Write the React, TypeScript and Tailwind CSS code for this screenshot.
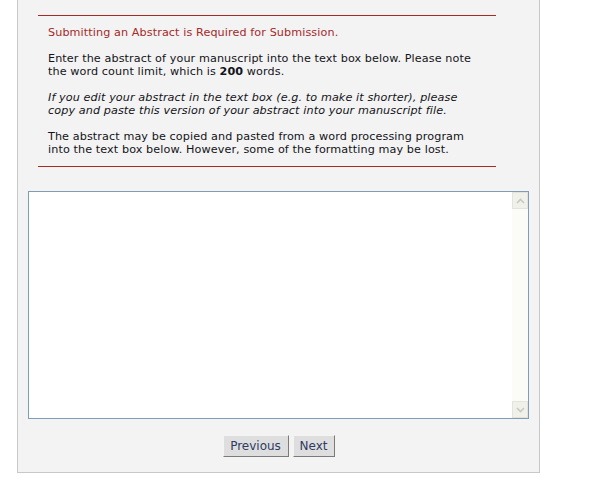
import { useState } from "react";

const font = { fontFamily: '"DejaVu Sans", Verdana, sans-serif' };

const ScrollArrow = ({ up }: { up?: boolean }) => (
  <div className="flex h-[17px] w-[16px] items-center justify-center border border-[#e4e4dc] bg-[#f1f1ec]">
    <svg width="9" height="6" viewBox="0 0 9 6" fill="none">
      <path
        d={up ? "M1 5 L4.5 1.5 L8 5" : "M1 1 L4.5 4.5 L8 1"}
        stroke="#c9c9c0"
        strokeWidth="1.6"
      />
    </svg>
  </div>
);

export default function App() {
  const [abstract, setAbstract] = useState("");

  return (
    <div className="min-h-screen bg-white text-[11.2px] leading-[13px] tracking-[0.1px]" style={font}>
      {/* main panel */}
      <div className="ml-[17px] flex w-[523px] flex-col items-start border-x border-b border-[#c8c8c8] bg-[#f3f3f3] pb-[15px]">
        {/* instructions box */}
        <div className="ml-[20px] mt-[15px] w-[458px] text-[#141420]">
          <div className="h-px bg-[#a52a2a]" />
          <div className="px-[10px] py-[10px]">
            <p className="text-[#a52a2a]">Submitting an Abstract is Required for Submission.</p>
            <p className="mt-[13px]">
              Enter the abstract of your manuscript into the text box below. Please note
              <br />
              the word count limit, which is <b>200</b> words.
            </p>
            <p className="mt-[13px] italic">
              If you edit your abstract in the text box (e.g. to make it shorter), please
              <br />
              copy and paste this version of your abstract into your manuscript file.
            </p>
            <p className="mt-[13px]">
              The abstract may be copied and pasted from a word processing program
              <br />
              into the text box below. However, some of the formatting may be lost.
            </p>
          </div>
          <div className="h-px bg-[#a52a2a]" />
        </div>

        {/* abstract text box */}
        <div className="ml-[10px] mt-[24px] flex h-[228px] w-[501px] border border-[#7f9db9] bg-white">
          <textarea
            value={abstract}
            onChange={(e) => setAbstract(e.target.value)}
            className="flex-1 resize-none bg-white p-[2px] outline-none"
            style={font}
          />
          <div className="flex w-[16px] flex-col bg-[#fbfbf8]">
            <ScrollArrow up />
            <div className="flex-1" />
            <ScrollArrow />
          </div>
        </div>

        {/* nav buttons */}
        <div className="mt-[16px] flex w-full justify-center gap-[4px]">
          <button
            className="h-[22px] w-[66px] border border-t-[#f4f4f4] border-l-[#f4f4f4] border-b-[#7a7a7a] border-r-[#7a7a7a] bg-[#dedede] text-[12px] tracking-normal text-[#2e3b63]"
            style={font}
          >
            Previous
          </button>
          <button
            className="h-[22px] w-[42px] border border-t-[#f4f4f4] border-l-[#f4f4f4] border-b-[#7a7a7a] border-r-[#7a7a7a] bg-[#dedede] text-[12px] tracking-normal text-[#2e3b63]"
            style={font}
          >
            Next
          </button>
        </div>
      </div>
    </div>
  );
}
